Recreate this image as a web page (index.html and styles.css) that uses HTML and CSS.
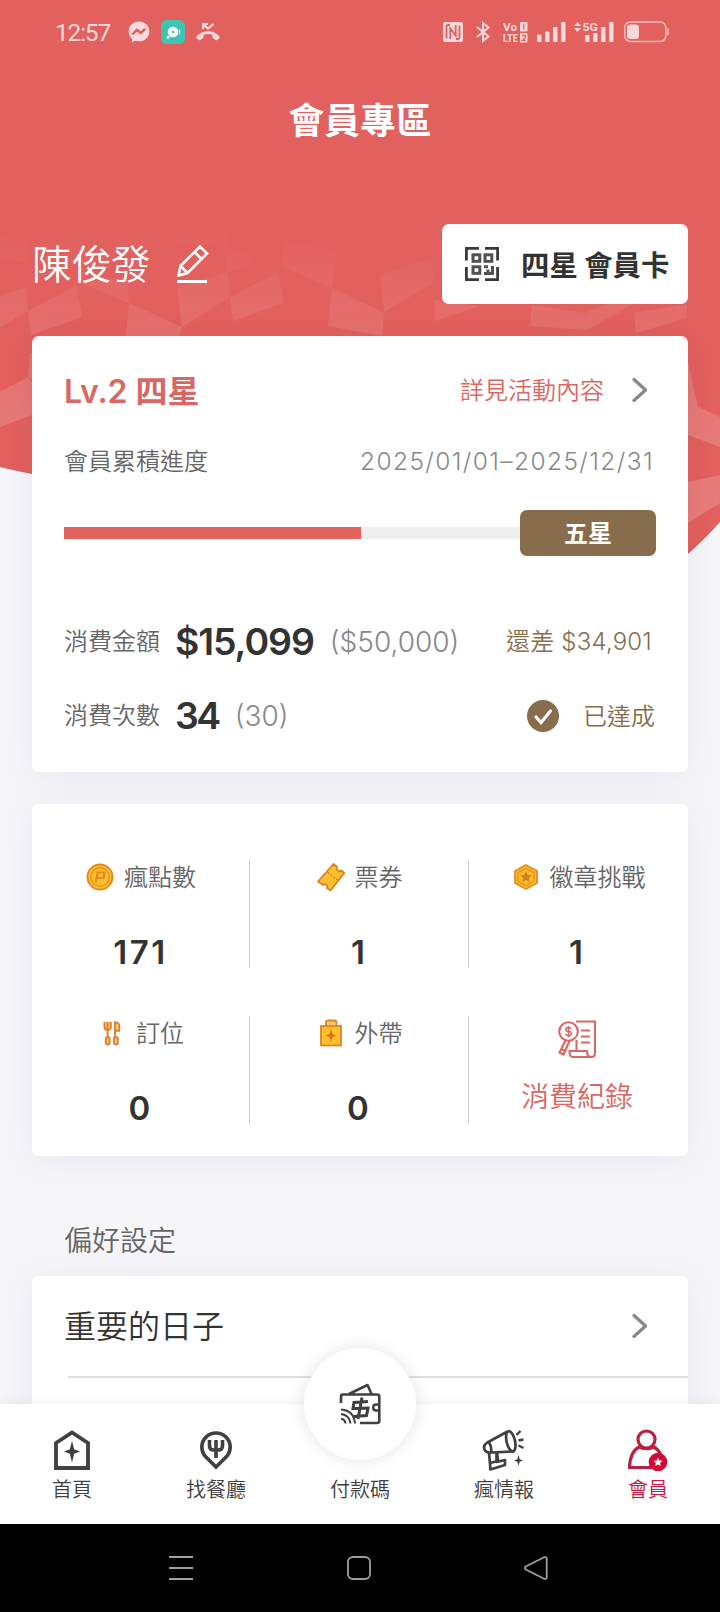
FILE: index.html
```html
<!DOCTYPE html>
<html lang="zh-Hant">
<head>
<meta charset="utf-8">
<title>會員專區</title>
<link rel="stylesheet" href="styles.css">
</head>
<body>
<main class="content">
  <svg class="backdrop" width="720" height="600" viewBox="0 0 720 600">
    <defs>
      <linearGradient id="fade" gradientUnits="userSpaceOnUse" x1="0" y1="200" x2="0" y2="440">
        <stop offset="0" stop-color="#fff" stop-opacity="0"/>
        <stop offset=".2" stop-color="#fff" stop-opacity=".02"/>
        <stop offset=".55" stop-color="#fff" stop-opacity=".1"/>
        <stop offset="1" stop-color="#fff" stop-opacity=".17"/>
      </linearGradient>
    </defs>
    <path fill="#e2605e" d="M0 0H720V522Q704 540 688 554Q640 590 560 580L32 474Q16 471 0 467Z"/>
    <g fill="url(#fade)">
      <path d="M0 235 27 243 28 262 0 260Z"/>
      <path d="M0 295 26 288 28 311 0 327Z"/>
      <path d="M28 311 77 285 82 317 31 335Z"/>
      <path d="M80 283 127 277 129 303Z"/>
      <path d="M129 303 182 327 180 336H126Z"/>
      <path d="M177 287 228 272 230 297 182 327Z"/>
      <path d="M230 297 278 272 284 303 233 321Z"/>
      <path d="M283 242 337 250 332 288 281 266Z"/>
      <path d="M175 226 230 229 228 247 178 243Z"/>
      <path d="M222 246 250 252 248 267 228 272Z"/>
      <path d="M332 288 384 313 382 336 328 326Z"/>
      <path d="M380 275 432 258 433 283 384 312Z"/>
      <path d="M434 300 480 306 435 321Z"/>
      <path d="M532 305 585 313 587 330 530 326Z"/>
      <path d="M585 313 610 303H635L587 330Z"/>
      <path d="M634 313 687 304V318L636 333Z"/>
      <path d="M0 392 28 377 32 383V415L0 427Z"/>
      <path d="M30 353H33V380L28 377Z"/>
      <path d="M688 363V402L698 407Z"/>
      <path d="M688 402 720 417V447L688 435Z"/>
      <path d="M688 482 720 475V503L688 523Z"/>
    </g>
  </svg>

  <header class="status">
    <div class="status-left">
      <span class="clock">12:57</span>
      <svg width="22" height="22" viewBox="0 0 22 22"><path fill="#fbd9d9" d="M11 .5C5 .5.7 4.800.7 10.600c0 3 1.300 5.600 3.300 7.300V21.300l3.200-1.500c1.200.3 2.500.5 3.800.5 6 0 10.300-4.200 10.300-9.900S17 .5 11 .5Z"/><path fill="none" stroke="#e2605e" stroke-width="2.600" d="m4.500 13.300 4.300-4.400 4 3 4.400-4"/></svg>
      <svg width="24" height="24" viewBox="0 0 24 24"><rect width="24" height="24" rx="5.500" fill="#3fc4b4"/><circle cx="12" cy="12" r="5.300" fill="#fff"/><circle cx="12" cy="12" r="1.200" fill="#3fc4b4"/><circle cx="7" cy="17.300" r="1.500" fill="#fff"/><path d="M18.500 9.500v5" stroke="#a8e5dd" stroke-width="1.600"/></svg>
      <svg width="24" height="20" viewBox="0 0 24 20"><path fill="none" stroke="#fbd9d9" stroke-width="2.200" d="M7 7V2h5M7.500 2.500 12 6.500 17.500 2"/><path fill="#fbd9d9" d="M.6 14.500C6 7.600 18 7.600 23.400 14.500c.5.700.4 1.200-.1 1.700l-2 1.700c-.6.500-1.300.4-1.800 0l-2.500-2c-.6-.5-.6-1-.6-1.700v-1.500c-2.500-.8-6.300-.8-8.800 0v1.500c0 .7 0 1.200-.6 1.700l-2.500 2c-.5.400-1.200.5-1.800 0l-2-1.700c-.5-.5-.6-1-.1-1.700Z"/></svg>
    </div>
    <div class="status-right">
      <svg width="20" height="20" viewBox="0 0 20 20"><rect width="20" height="20" rx="2" fill="#fbd9d9"/><path fill="none" stroke="#e2605e" stroke-width="1.800" d="M3.500 16.500V4.500Q3.500 3 5 3H7M16.500 3.500V15.500Q16.500 17 15 17H13M7.300 17V6.500L12.700 13.500V3"/></svg>
      <svg class="bt" width="14" height="22" viewBox="0 0 14 22"><path fill="none" stroke="#fbd9d9" stroke-width="2" d="m1 6 11.500 9.500L7 20V2l5.500 4.500L1 16"/></svg>
      <svg class="volte" width="25" height="22" viewBox="0 0 25 22" fill="#fbd9d9"><text x="0" y="10" textLength="14" lengthAdjust="spacingAndGlyphs">Vo</text><text x="0" y="21" textLength="15" lengthAdjust="spacingAndGlyphs">LTE</text><rect x="17" y="1" width="7.500" height="9.500" rx="1"/><rect x="17" y="12" width="7.500" height="9.500" rx="1"/><path stroke="#e2605e" stroke-width="1.300" fill="none" d="M20.800 3v5.500M19 14.500h3.500v2L19.300 19.300h3.500"/></svg>
      <svg class="bars" width="29" height="20" viewBox="0 0 29 20" fill="#fbd9d9"><rect y="12.500" width="4.500" height="7.500" rx="1"/><rect x="8" y="9.500" width="4.500" height="10.500" rx="1"/><rect x="16" y="5" width="4.500" height="15" rx="1"/><rect x="24" width="4.500" height="20" rx="1"/></svg>
      <svg class="fiveg" width="40" height="22" viewBox="0 0 40 22" fill="#fbd9d9"><path d="M0 5 3.500 1 7 5ZM0 7 3.500 11 7 7Z"/><text x="8.500" y="10" textLength="15.500" lengthAdjust="spacingAndGlyphs">5G</text><rect x="11" y="14" width="4.500" height="7" rx="1"/><rect x="19" y="12" width="4.500" height="9" rx="1"/><rect x="27" y="6" width="4.500" height="15" rx="1"/><rect x="35" y="1" width="4.500" height="20" rx="1"/></svg>
      <svg class="battery" width="45" height="22" viewBox="0 0 45 22"><rect x=".8" y="1" width="41" height="19.500" rx="5.500" fill="none" stroke="#f5bcbc" stroke-width="1.500"/><rect x="3" y="3.500" width="12" height="14.500" rx="3" fill="#fbd9d9"/><path d="M44 7.500v6.500" stroke="#f5bcbc" stroke-width="1.800"/></svg>
    </div>
  </header>

  <h1 class="title">會員專區</h1>

  <section class="profile">
    <div class="who">
      <span class="name">陳俊發</span>
      <svg width="34" height="40" viewBox="0 0 34 40" fill="none" stroke="#fff" stroke-width="2.600"><path d="M2.500 31.500 4.500 22 24 2.500 31 9.500 11.500 29ZM18.500 8l7 7M4.500 22l7 7"/><path stroke-width="3" d="M1 37.500H31"/></svg>
    </div>
    <button class="member-card">
      <svg width="34" height="34" viewBox="0 0 34 34" fill="none" stroke="#3a3a3a" stroke-width="2.800"><path d="M1.400 13.500V1.400H14M20 1.400H32.600V13.500M1.400 20V32.600H14M20 32.600H32.600V20"/><g stroke="#505050" stroke-width="3"><rect x="8" y="7.800" width="6.800" height="6.500"/><rect x="20" y="7.800" width="6.800" height="6.500"/><rect x="8" y="19.800" width="6.800" height="6.500"/><path d="M27.500 19v7.500h-8.500M19 19.800h4M23 22.500v4"/></g></svg>
      <span>四星 會員卡</span>
    </button>
  </section>

  <section class="card level">
    <div class="row level-head">
      <span class="level-name">Lv.2 四星</span>
      <a class="more"><span>詳見活動內容</span><svg width="16" height="26" viewBox="0 0 16 26" fill="none" stroke="#888" stroke-width="3.200" stroke-linecap="round" stroke-linejoin="round"><path d="M2 2.500 13.500 13 2 23.500"/></svg></a>
    </div>
    <div class="row period"><span class="label">會員累積進度</span><span class="dates">2025/01/01–2025/12/31</span></div>
    <div class="progress"><div class="track"><div class="fill"></div></div><span class="goal">五星</span></div>
    <div class="row stat">
      <span class="label">消費金額</span><b class="amount">$15,099</b><span class="target">($50,000)</span><span class="rest left-over">還差 $34,901</span>
    </div>
    <div class="row stat">
      <span class="label">消費次數</span><b class="amount count">34</b><span class="target">(30)</span>
      <span class="rest done"><svg width="32" height="32" viewBox="0 0 32 32"><circle cx="16" cy="16" r="16" fill="#876d4b"/><path d="m9 17 5 5.500L23.500 11" fill="none" stroke="#fff" stroke-width="3.200" stroke-linecap="round"/></svg><span>已達成</span></span>
    </div>
  </section>

  <section class="card grid">
    <div class="cell">
      <div class="cell-label"><svg width="28" height="28" viewBox="0 0 28 28"><circle cx="14" cy="14" r="12.500" fill="#fdbf2d" stroke="#e58a1f" stroke-width="2"/><circle cx="14" cy="14" r="9.300" fill="none" stroke="#e58a1f" stroke-width="1.200"/><path d="M9.800 19.500 11.500 9.500H18.500L17.500 15H11" fill="none" stroke="#e58a1f" stroke-width="2.200"/></svg><span>瘋點數</span></div>
      <b class="num wide">171</b>
    </div>
    <div class="cell">
      <div class="cell-label"><svg width="28" height="29" viewBox="0 0 28 29"><path fill="#fdbf2d" stroke="#d9821f" stroke-width="1.800" stroke-linejoin="round" d="M16.500 1 20 4q-1 2.500 1 3.500t3.500 0L27.200 10 13.500 27.500 10 25q1-2-.5-3.200T6 22L1 18.500Z"/><path d="m10.500 9.500 10.500 8" stroke="#d9821f" stroke-width="1.200" stroke-dasharray="2.200 1.400"/></svg><span>票券</span></div>
      <b class="num">1</b>
    </div>
    <div class="cell">
      <div class="cell-label badge-label"><svg width="24" height="26" viewBox="0 0 24 26"><path fill="#fdbf2d" stroke="#e58a1f" stroke-width="1.800" d="M12 1 23 7V19L12 25 1 19V7Z"/><path fill="none" stroke="#e58a1f" stroke-width="1.200" d="M12 4.200 20 8.700V17.300L12 21.800 4 17.300V8.700Z"/><path fill="#dc7a1c" d="m12 7 1.700 3.900 4.300.4-3.200 2.800.9 4.200L12 16.100l-3.700 2.200.9-4.200L6 11.300l4.300-.4Z"/></svg><span>徽章挑戰</span></div>
      <b class="num">1</b>
    </div>
    <div class="cell">
      <div class="cell-label book-label"><svg width="18" height="25" viewBox="0 0 18 25" fill="#fdc76a" stroke="#dd8033" stroke-width="1.900"><path d="M1.500 1V6.500Q1.500 9 4.500 9T7.800 6.500V1M4.600 1V16"/><path d="M12 16V1.200Q16.500 1.200 16.300 6V9.800H12.800"/><rect x="2.800" y="16" width="3.800" height="7.500" rx="1.800"/><rect x="11" y="16" width="3.800" height="7.500" rx="1.800"/></svg><span>訂位</span></div>
      <b class="num">0</b>
    </div>
    <div class="cell">
      <div class="cell-label bag-label"><svg width="22" height="28" viewBox="0 0 22 28"><path fill="#fdc76a" stroke="#dd8420" stroke-width="1.800" d="M6 7V3.500Q6 1.500 8 1.500h6.500q2 0 2 2V7"/><rect x="1" y="7" width="20" height="19.500" fill="#fdbf2d" stroke="#dd8420" stroke-width="1.800"/><path fill="#d9701c" d="m11 10 1.400 5 3.600 1.500-3.600 1.500L11 23l-1.400-5L6 16.500 9.600 15Z"/></svg><span>外帶</span></div>
      <b class="num">0</b>
    </div>
    <div class="cell records">
      <svg width="38" height="38" viewBox="0 0 38 38" fill="none" stroke="#d96865" stroke-width="2.100"><path d="M18 1.500H37V33Q37 37 33.500 37H15Q11.500 37 11.500 31H29Q29 37 33 37M18.500 20V31M23 10.500h9M23 16.500h9M23 22.500h9"/><circle cx="10.500" cy="11.500" r="9.300" fill="#fff"/><path d="M7.500 20.500 1.500 32.500 5.500 34.500 11.500 21M3.200 29l4 2"/><path stroke-width="1.500" d="M13.300 8.800Q12.500 7.500 10.500 7.500 7.800 7.500 7.800 9.500T10.600 11.500 13.400 13.700 10.500 15.600 7.500 14M10.500 5.800V17.200"/></svg>
      <span>消費紀錄</span>
    </div>
  </section>

  <h2 class="section-title">偏好設定</h2>
  <section class="card settings">
    <div class="row setting"><span>重要的日子</span><svg width="16" height="26" viewBox="0 0 16 26" fill="none" stroke="#888" stroke-width="3.200" stroke-linecap="round" stroke-linejoin="round"><path d="M2 2.500 13.500 13 2 23.500"/></svg></div>
    <hr class="rule">
  </section>
</main>

<nav class="tabs">
  <a class="tab"><svg width="36" height="42" viewBox="0 0 36 42"><path fill="none" stroke="#404040" stroke-width="3.800" d="M2 39V14L18 3.500 34 14V39Z"/><path fill="#404040" d="m18 12 2.200 8.300 6 2.200-6 2.200L18 33.500l-2.200-8.800-6-2.200 6-2.200Z"/></svg><span>首頁</span></a>
  <a class="tab"><svg width="34" height="42" viewBox="0 0 34 42" fill="none" stroke="#404040" stroke-width="3.600"><path d="M17 38 5.500 26.500A14.200 14.200 0 1 1 28.500 26.500Z"/><path d="M10.500 11v5.500q0 4.500 4 4.500h5q4 0 4-4.500V11M17 11V29"/></svg><span>找餐廳</span></a>
  <a class="tab pay"><span class="pay-bubble"><svg width="42" height="42" viewBox="0 0 42 42" fill="none" stroke="#404040" stroke-width="2.600" stroke-linejoin="round"><path d="M2 20V13.500Q2 11.500 4 11.500H38Q40.300 11.500 40.300 13.500V37.500Q40.300 40 38 40H21M10 11 28.500 2 32.500 11"/><path d="M41 21.500h-4q-2.800 0-2.800 3t2.800 3h4" stroke-width="2.400"/><path d="M2 35.800q4 .5 4.500 4.700M2 31q8.500 1 9.500 9.500M2 26.500q13 1 14 14" stroke-width="2"/><path stroke-linejoin="miter" stroke-width="3" d="M29 18.500 15 19.500 14 25.500 29 25 27.500 32.500 14.500 33.500M23 14.500 19 36"/></svg></span><span>付款碼</span></a>
  <a class="tab"><svg class="horn" width="42" height="42" viewBox="0 0 42 42" fill="none" stroke="#404040" stroke-width="2.700" stroke-linejoin="round"><path d="M4.500 14 25.500 2.500M9.500 23.500 32 22.500M4.500 14Q1 17 2.500 20.500T9.500 23.500"/><ellipse cx="28.800" cy="12.300" rx="4.200" ry="10.300" transform="rotate(-13 28.800 12.300)"/><path d="M7 13q2.500 4 2.500 10M7 23.500 8.500 40.500 23 36V31L14.500 33V23.500M8 34l6-1.500M15 23.500l1 8"/><path stroke-linejoin="miter" d="m34.500 6 4-4M36.500 11.500l5-1M36.500 16.500l5 2.500" stroke-width="2.400"/><path fill="#404040" stroke="none" d="m36.500 26 1.200 4.300L41 31.500l-3.300 1.200L36.500 37l-1.200-4.300L32 31.500l3.300-1.200Z"/></svg><span>瘋情報</span></a>
  <a class="tab active"><svg width="42" height="42" viewBox="0 0 42 42"><g fill="none" stroke="#b92140" stroke-width="3.200"><circle cx="19.500" cy="10.500" r="8.500"/><path d="M13 17.500Q3 22 2.500 38.500H25M26 17.500Q31 20 33.500 25M13 18.500Q19.500 21 26 18.500"/></g><circle cx="31" cy="33" r="9.300" fill="#d20a36"/><path fill="#fff" d="m31 28.500 1.300 3 3.200.3-2.400 2.100.7 3.100-2.800-1.600-2.800 1.600.7-3.100-2.400-2.100 3.200-.3Z"/></svg><span>會員</span></a>
</nav>

<footer class="sysnav">
  <svg width="24" height="26" viewBox="0 0 24 26" stroke="#a0a0a0" stroke-width="2"><path d="M0 2H24M0 13H24M0 24H24"/></svg>
  <svg width="24" height="26" viewBox="0 0 24 26" fill="none" stroke="#a0a0a0" stroke-width="1.800"><rect x="1" y="2" width="22" height="22" rx="5"/></svg>
  <svg width="24" height="26" viewBox="0 0 24 26" fill="none" stroke="#a0a0a0" stroke-width="1.800" stroke-linejoin="round"><path d="M1.800 11.500 20 2.300Q22.700 1.300 22.700 4V22Q22.700 24.700 20 23.700L1.800 14.500Q0 13 1.800 11.500Z"/></svg>
</footer>
</body>
</html>
```
FILE: styles.css
```css
* { box-sizing: border-box; }
body {
  margin: 0;
  width: 720px;
  height: 1612px;
  display: flex;
  flex-direction: column;
  overflow: hidden;
  background: #f5f5fa;
  color: #333;
  font-family: Inter, "Noto Sans CJK TC", sans-serif;
  font-weight: 350;
}
svg { display: block; flex: none; }
.content { position: relative; height: 1404px; overflow: hidden; }
.backdrop { position: absolute; left: 0; top: 0; z-index: -1; }

.status { display: flex; justify-content: space-between; height: 64px; padding: 0 51px 0 55px; color: #fbd9d9; }
.status-left { display: flex; align-items: center; }
.clock { width: 73px; padding-top: 1px; font-family: Roboto, sans-serif; font-size: 24.500px; letter-spacing: -1.200px; font-weight: 400; }
.status-left svg + svg { margin-left: 11px; }
.status-right { display: flex; align-items: center; }
.status-right text { font-family: Roboto, sans-serif; font-size: 11.500px; font-weight: 700; }
.status-right svg { overflow: visible; }
.bt { margin-left: 13px; }
.volte { margin-left: 13px; }
.bars { margin-left: 9px; }
.fiveg { margin-left: 8px; }
.battery { margin-left: 10px; }

.title { margin: 0; padding-top: 35px; height: 160px; text-align: center; font-size: 35.800px; line-height: 44px; font-weight: 700; color: #fff; }

.profile { display: flex; justify-content: space-between; padding: 0 32px; height: 112px; }
.who { display: flex; align-items: center; height: 80px; gap: 25px; color: #fff; }
.name { padding-top: 1px; font-size: 39.500px; line-height: 56px; }
.member-card { display: flex; align-items: center; gap: 24px; width: 246px; height: 80px; padding: 0 0 0 23px; border: 0; border-radius: 7px; background: #fff; color: #333; font-family: "Noto Sans CJK TC", sans-serif; font-size: 28.400px; font-weight: 700; white-space: nowrap; }
.member-card span { margin-left: -2px; padding-bottom: 2px; }

.card { margin: 0 32px; border-radius: 7px; background: #fff; box-shadow: 0 4px 36px rgba(20, 20, 50, .06); }
.row { display: flex; align-items: center; }
.label { padding-bottom: 5px; font-size: 24px; color: #666; }

.level { height: 436px; padding: 24px 32px 0; }
.level-head { justify-content: space-between; height: 60px; }
.level-name { padding-bottom: 2px; font-size: 32px; font-weight: 600; color: #d96865; }
.more { display: flex; align-items: center; gap: 28px; padding-right: 8px; font-size: 24px; color: #d96865; }
.more span { padding-bottom: 3px; }
.period { justify-content: space-between; height: 84px; }
.dates { padding: 0 2px 2px 0; font-size: 24.500px; letter-spacing: 1.400px; color: #888; }
.progress { display: flex; align-items: center; margin-top: 6px; height: 46px; }
.track { flex: 1; height: 12px; background: #eee; }
.fill { width: 297px; height: 12px; background: #e2605e; }
.goal { width: 136px; height: 46px; border-radius: 7px; background: #876d4b; color: #fff; text-align: center; font-size: 24px; line-height: 47px; font-weight: 700; }
.stat { height: 74px; }
.progress + .stat { margin-top: 49px; }
.amount { margin-left: 15px; padding-bottom: 2px; font-size: 37.500px; font-weight: 600; letter-spacing: -1.100px; }
.count { letter-spacing: -2.500px; }
.target { margin-left: 16px; padding-bottom: 1px; font-size: 28px; color: #888; }
.rest { display: flex; align-items: center; margin-left: auto; font-size: 24px; color: #876d4b; white-space: pre; }
.left-over { padding: 0 4px 5px 0; letter-spacing: .2px; }
.done { gap: 24px; padding-right: 1px; }
.done span { padding-bottom: 4px; }

.grid { display: grid; grid-template-columns: 218px 219px 219px; grid-template-rows: 108px 108px; row-gap: 48px; margin-top: 32px; height: 352px; padding-top: 56px; }
.cell { display: flex; flex-direction: column; align-items: center; border-right: 1px solid #ccc; }
.cell:nth-child(3n) { border-right: 0; padding-right: 3px; }
.cell-label { display: flex; align-items: center; justify-content: center; gap: 10px; height: 34px; font-size: 24px; color: #666; padding-left: 1px; }
.cell-label span { padding-bottom: 3px; }
.badge-label { gap: 12px; padding-left: 5px; }
.book-label { gap: 15px; padding-left: 6px; }
.bag-label { gap: 13px; padding-left: 4px; }
.num { margin-top: 34px; padding-right: 2px; font-size: 33px; line-height: 48px; font-weight: 600; }
.wide { margin-right: -2px; letter-spacing: 2.500px; }
.records { padding-top: 4px; color: #d96865; font-size: 28px; }
.records span { margin-top: 18px; line-height: 42px; }

.section-title { margin: 0; padding: 65px 0 0 64px; height: 120px; font-size: 28px; line-height: 40px; font-weight: 350; color: #666; }
.settings { height: 200px; }
.setting { justify-content: space-between; height: 100px; padding: 0 40px 0 32px; font-size: 32px; }
.setting span { padding-bottom: 4px; }
.rule { margin: 0 0 0 36px; border: 0; height: 2px; background: #ddd; }

.tabs { position: relative; display: grid; grid-template-columns: repeat(5, 144px); height: 120px; background: #fff; box-shadow: 0 0 14px rgba(0, 0, 0, .07); }
.tab { display: flex; flex-direction: column; align-items: center; padding-top: 25px; font-size: 20px; line-height: 30px; color: #404040; }
.tab > svg { margin-bottom: 4px; }
.horn { margin-right: 2px; }
.pay { padding-top: 0; }
.pay-bubble { display: flex; align-items: center; justify-content: center; width: 112px; height: 112px; margin: -56px 0 15px; border-radius: 50%; background: #fff; box-shadow: 0 0 18px rgba(0, 0, 0, .1); }
.active { color: #c8143c; }

.sysnav { position: relative; display: flex; align-items: center; justify-content: space-between; height: 88px; padding: 0 172px 0 169px; background: #000; }
```
